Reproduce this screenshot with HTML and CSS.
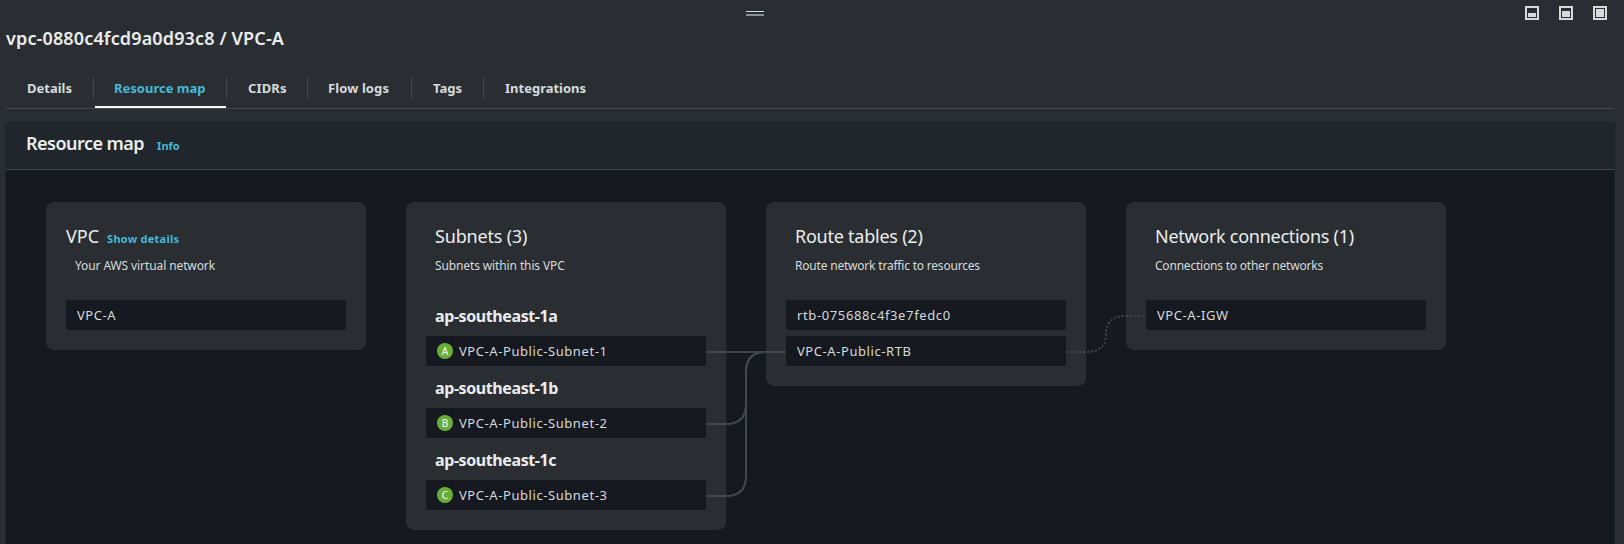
FILE: index.html
```html
<!DOCTYPE html>
<html lang="en">
<head>
<meta charset="utf-8">
<title>VPC-A resource map</title>
<link rel="stylesheet" href="styles.css">
</head>
<body>
<div class="panel">
  <div class="toolbar">
    <svg class="handle" width="18" height="6" viewBox="0 0 18 6"><path d="M0 .5h18" stroke="#d5dbdb"/><path d="M0 4h18" stroke="#879196" stroke-width="2"/></svg>
    <div class="sizes">
      <svg width="14" height="14" viewBox="0 0 14 14"><path class="frame" d="M1 1h12v12H1z"/><path class="fill" d="M3 7h8v4H3z"/></svg>
      <svg width="14" height="14" viewBox="0 0 14 14"><path class="frame" d="M1 1h12v12H1z"/><path class="fill" d="M3 5h8v6H3z"/></svg>
      <svg width="14" height="14" viewBox="0 0 14 14"><path class="frame" d="M1 1h12v12H1z"/><path class="fill" d="M3 3h8v8H3z"/></svg>
    </div>
  </div>
  <h1 class="title"><span>vpc-0880c4fcd9a0d93c8 / VPC-A</span></h1>
  <nav class="tabs">
    <a class="tab t-details"><span>Details</span></a>
    <a class="tab t-map active"><span>Resource map</span></a>
    <a class="tab t-cidrs"><span>CIDRs</span></a>
    <a class="tab t-flow"><span>Flow logs</span></a>
    <a class="tab t-tags"><span>Tags</span></a>
    <a class="tab t-int"><span>Integrations</span></a>
  </nav>
  <section class="container">
    <header class="head"><h2>Resource map</h2><a class="link info">Info</a></header>
    <div class="map">
      <div class="card">
        <div class="heading flush"><h3 class="h-vpc">VPC</h3><a class="link show">Show details</a></div>
        <p class="desc d-vpc">Your AWS virtual network</p>
        <div class="items"><div class="item"><span>VPC-A</span></div></div>
      </div>
      <div class="card">
        <div class="heading"><h3 class="h-sub">Subnets (3)</h3></div>
        <p class="desc d-sub">Subnets within this VPC</p>
        <div class="zones">
          <h4>ap-southeast-1a</h4>
          <div class="item"><i class="badge">A</i><span>VPC-A-Public-Subnet-1</span></div>
          <h4>ap-southeast-1b</h4>
          <div class="item"><i class="badge">B</i><span>VPC-A-Public-Subnet-2</span></div>
          <h4>ap-southeast-1c</h4>
          <div class="item"><i class="badge">C</i><span>VPC-A-Public-Subnet-3</span></div>
        </div>
      </div>
      <div class="card">
        <div class="heading"><h3 class="h-rt">Route tables (2)</h3></div>
        <p class="desc d-rt">Route network traffic to resources</p>
        <div class="items">
          <div class="item"><span class="n-rtb">rtb-075688c4f3e7fedc0</span></div>
          <div class="item"><span>VPC-A-Public-RTB</span></div>
        </div>
      </div>
      <div class="card">
        <div class="heading"><h3 class="h-net">Network connections (1)</h3></div>
        <p class="desc d-net">Connections to other networks</p>
        <div class="items"><div class="item"><span>VPC-A-IGW</span></div></div>
      </div>
      <svg class="edges" width="440" height="200" viewBox="706 310 440 200">
        <path d="M706 352H786"/>
        <path d="M706 424H726Q746 424 746 404V372Q746 352 766 352"/>
        <path d="M706 496H726Q746 496 746 476V372Q746 352 766 352"/>
        <path class="dotted" d="M1067 352H1086Q1106 352 1106 334Q1106 316 1126 316H1146"/>
      </svg>
    </div>
  </section>
</div>
</body>
</html>
```
FILE: styles.css
```css
* { box-sizing: border-box; }
body { margin: 0; background: #2a2e33; color: #d5dbdb; font-family: "Noto Sans", sans-serif; overflow: hidden; }
h1, h2, h3, h4, p { margin: 0; }
span, h2, h3, h4, p, a { white-space: nowrap; }
svg { display: block; }
.panel { height: 544px; padding: 0 10px 0 6px; display: flex; flex-direction: column; }
.toolbar { height: 26px; flex: none; display: flex; justify-content: space-between; padding: 6px 7px 0 740px; }
.handle { margin-top: 5px; }
.sizes { display: flex; gap: 20px; }
.frame { fill: none; stroke: #d5dbdb; stroke-width: 2; }
.fill { fill: #d5dbdb; }
.title { height: 51px; flex: none; font-size: 18px; line-height: 24px; font-weight: 600; letter-spacing: .14px; color: #eaeded; }
.tabs { flex: none; height: 32px; display: flex; border-bottom: 1px solid #414750; }
.tab { height: 22px; border-right: 1px solid #414750; padding-left: 21px; font-size: 13px; line-height: 22px; font-weight: 700; position: relative; }
.tab:last-child { border: 0; }
.t-details { width: 88px; }
.t-map { width: 133px; padding-left: 20px; }
.t-cidrs { width: 81px; letter-spacing: .15px; }
.t-flow { width: 104px; padding-left: 20px; letter-spacing: .1px; }
.t-tags { width: 72px; }
.active { color: #44b9d6; }
.active::after { content: ""; position: absolute; left: 1px; right: 0; top: 29px; height: 2px; background: #fff; }
.container { flex: 1; margin-top: 13px; background: #16191f; box-shadow: 0 1px 1px 0 rgba(0,28,36,.5), 1px 1px 1px 0 rgba(0,28,36,.25), -1px 1px 1px 0 rgba(0,28,36,.25); }
.head { height: 48px; background: #21252c; border-bottom: 1px solid #414750; padding: 9px 20px; display: flex; align-items: baseline; gap: 13px; }
h2 { font-size: 18px; line-height: 24px; font-weight: 600; letter-spacing: -.52px; color: #eaeded; }
.link { font-size: 11px; line-height: 16px; font-weight: 700; color: #44b9d6; }
.show { letter-spacing: .26px; }
.map { position: relative; display: flex; align-items: flex-start; gap: 40px; padding: 32px 40px; }
.card { width: 320px; flex: none; background: #2a2e33; border-radius: 8px; padding: 22px 20px 20px; }
.heading { display: flex; align-items: baseline; gap: 8px; height: 24px; padding-left: 9px; }
.flush { padding-left: 0; }
h3 { font-size: 18px; line-height: 24px; font-weight: 400; color: #eaeded; }
.h-sub { letter-spacing: -.19px; }
.h-rt { letter-spacing: -.24px; }
.h-net { letter-spacing: -.28px; }
.desc { font-size: 12px; line-height: 16px; padding-left: 9px; margin-top: 10px; }
.d-vpc { letter-spacing: -.1px; }
.d-sub { letter-spacing: -.12px; }
.d-rt { letter-spacing: -.2px; }
.d-net { letter-spacing: -.21px; }
.items { margin-top: 26px; display: flex; flex-direction: column; gap: 6px; }
.item { height: 30px; background: #16191f; border-radius: 2px; padding: 0 11px; display: flex; align-items: center; font-size: 13px; line-height: 20px; letter-spacing: .57px; }
.n-rtb { letter-spacing: .62px; }
.zones { margin-top: 26px; display: grid; grid-template-rows: 36px 30px 42px 30px 42px 30px; }
.zones h4 { align-self: end; height: 31px; padding-left: 9px; font-size: 16px; line-height: 22px; font-weight: 700; letter-spacing: -.41px; color: #eaeded; }
.badge { width: 16px; height: 16px; border-radius: 50%; background: #6aaf35; color: #fff; font: 400 10px/16px "Noto Sans", sans-serif; letter-spacing: 0; text-align: center; margin-right: 6px; }
.edges { position: absolute; left: 700px; top: 140px; fill: none; stroke: #414750; stroke-width: 2; }
.dotted { stroke-dasharray: 2 2; }
```
